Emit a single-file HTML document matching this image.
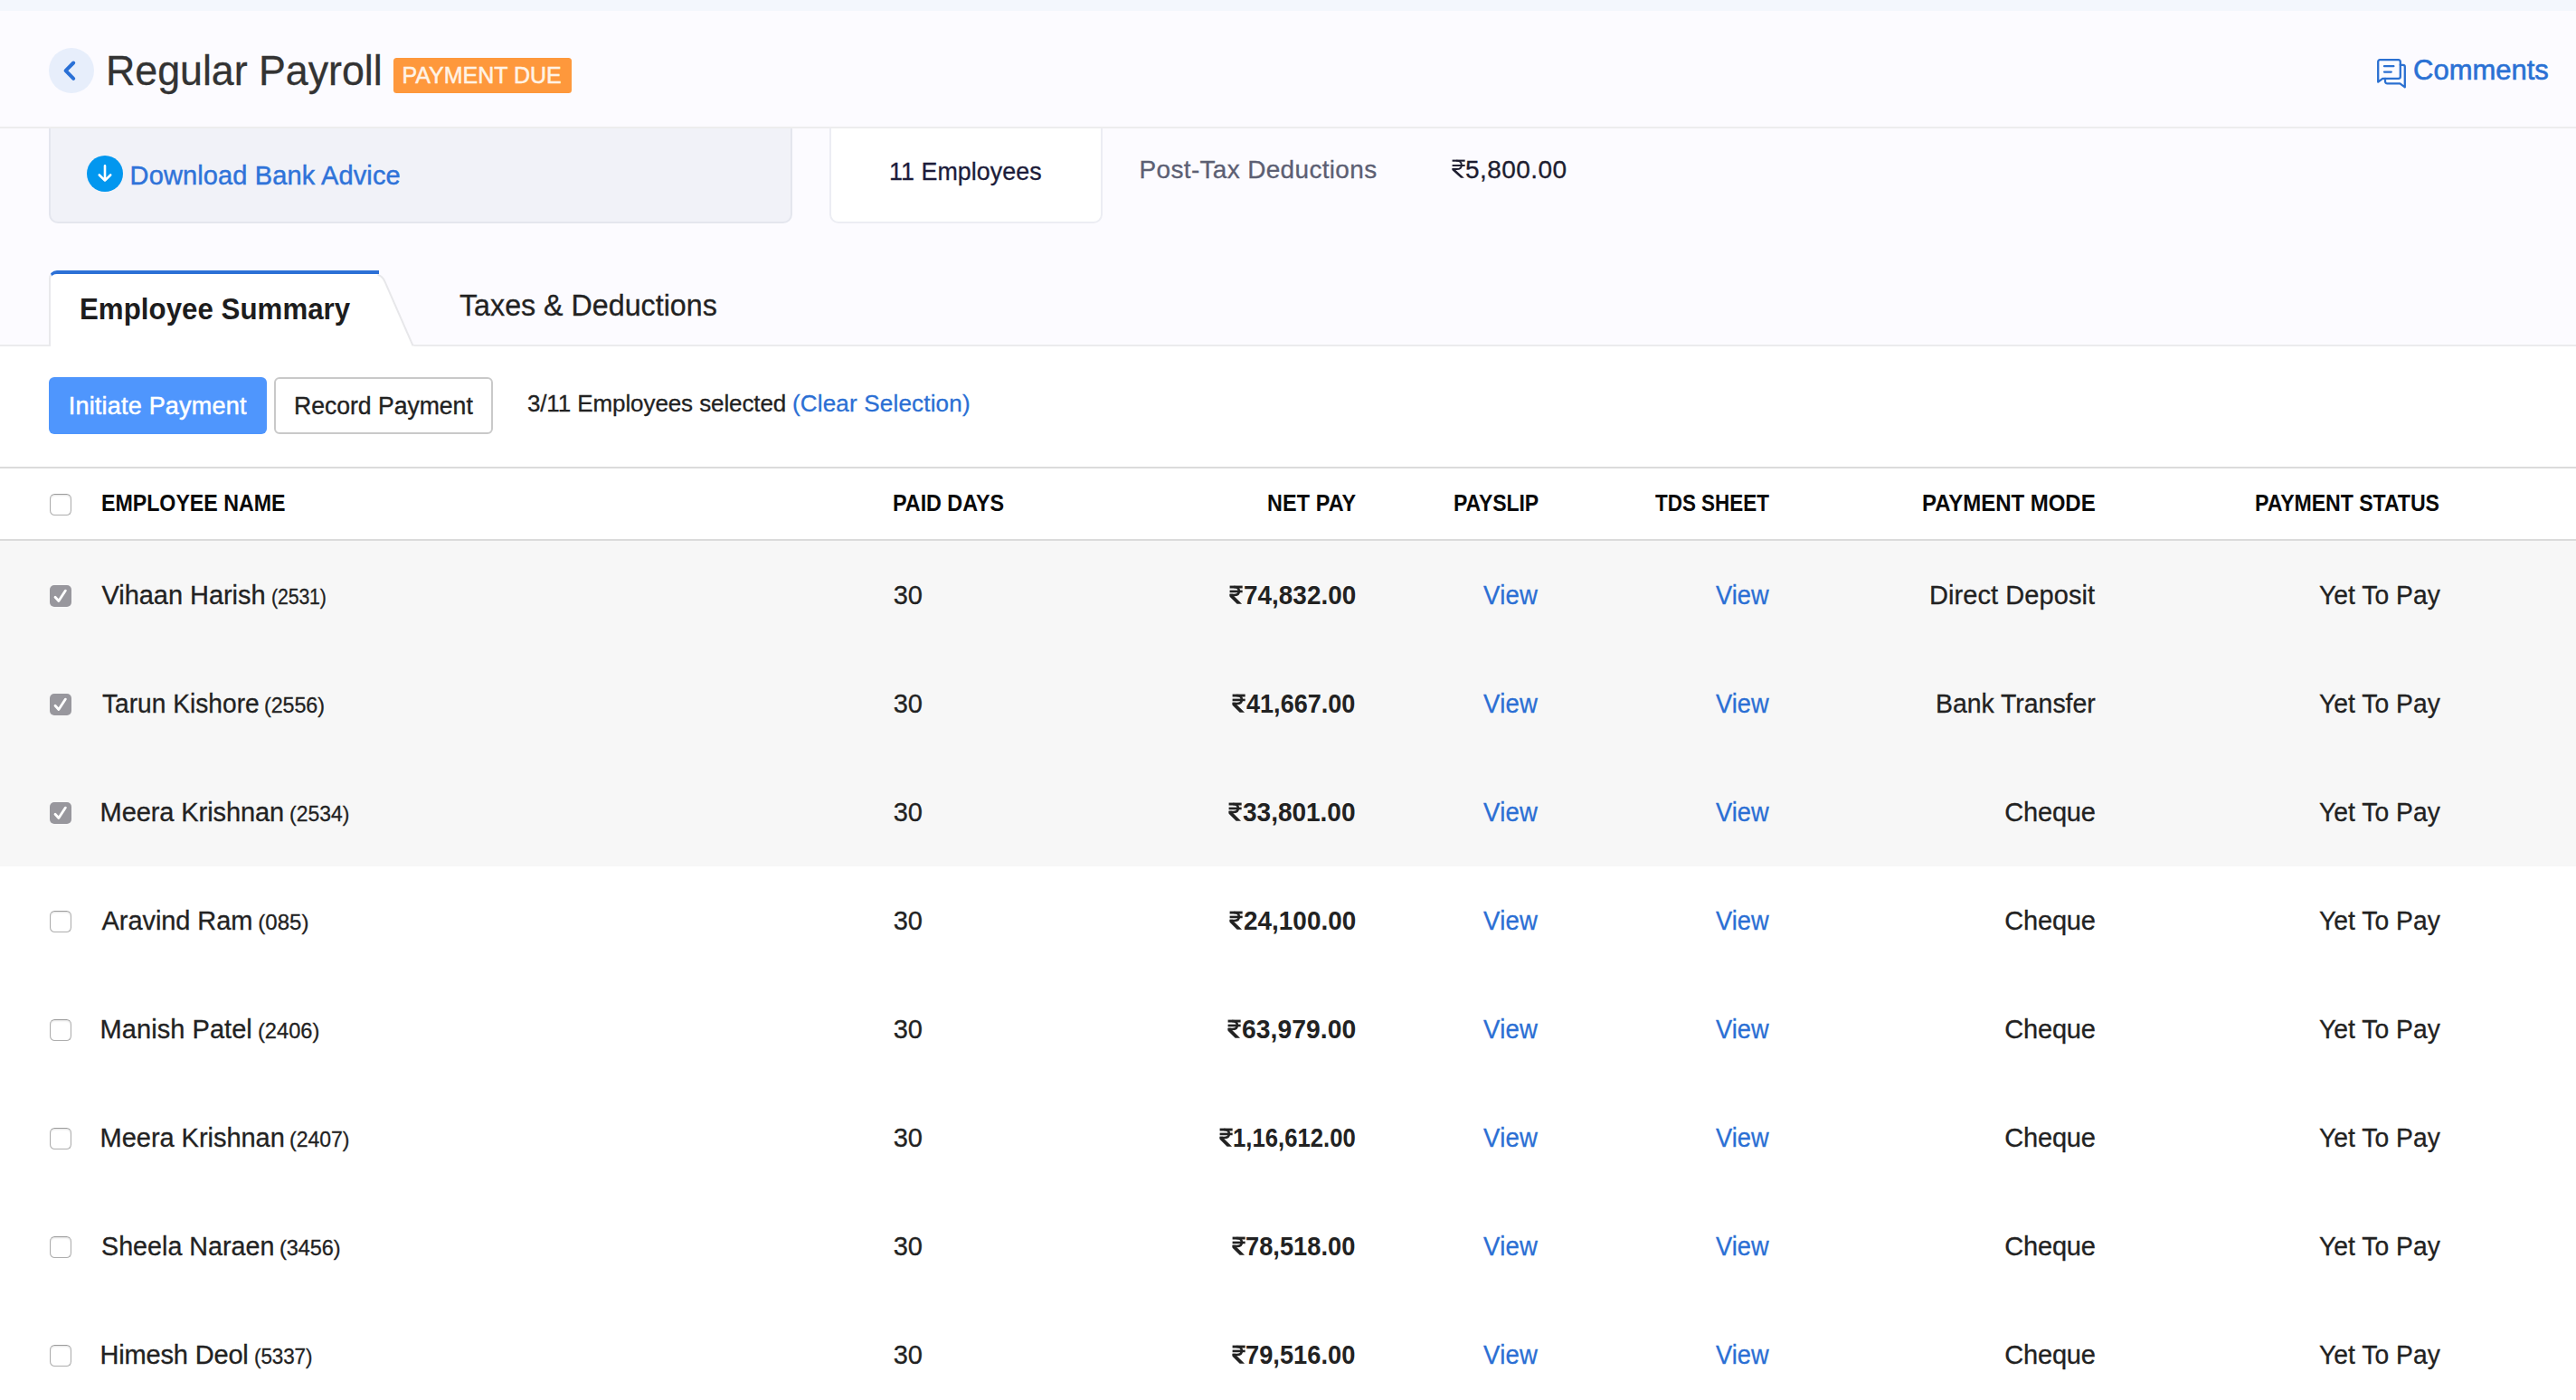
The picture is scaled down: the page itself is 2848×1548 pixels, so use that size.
<!DOCTYPE html><html><head><meta charset="utf-8"><title>Regular Payroll</title><style>
*{box-sizing:border-box;margin:0;padding:0}
html,body{width:2848px;height:1548px;overflow:hidden}
body{background:#fcfbff;font-family:"Liberation Sans",sans-serif;position:relative;color:#222}
.a{position:absolute}
.t{position:absolute;white-space:pre;line-height:normal;transform-origin:0 0}
.cb{position:absolute;left:55px;width:24px;height:24px;border-radius:5.5px}
.cb.off{background:#fff;border:1.5px solid #aeaeae;border-top-color:#9c9c9c;box-shadow:inset 0 1px 2px rgba(0,0,0,.12)}
.cb.on{background:#98979d;border-radius:5px}
</style></head><body>
<div class="a" style="left:54px;top:120px;width:822px;height:127px;border:2px solid #e4e6ee;border-radius:10px;background:#f1f2f8"></div>
<div class="a" style="left:917px;top:120px;width:302px;height:127px;border:2px solid #ecedf3;border-radius:10px;background:#fff"></div>
<div class="a" style="left:0;top:12px;width:2848px;height:128px;background:#fcfbff"></div>
<div class="a" style="left:0;top:0;width:2848px;height:12px;background:#f3f7fd"></div>
<div class="a" style="left:0;top:140px;width:2848px;height:2px;background:#ededee"></div>
<div class="a" style="left:54px;top:53px;width:50px;height:50px;border-radius:50%;background:#e7eefb"></div>
<svg class="a" style="left:54px;top:53px" width="50" height="50" viewBox="0 0 50 50"><path d="M27.2 16.5 L18.6 25.2 L27.2 33.8" fill="none" stroke="#2a70d6" stroke-width="4" stroke-linecap="round" stroke-linejoin="round"/></svg>
<div class="a" style="left:435px;top:64px;width:197px;height:39px;border-radius:3.5px;background:#fe983c"></div>
<svg class="a" style="left:2626px;top:63px" width="36" height="36" viewBox="0 0 36 36" fill="none" stroke="#2b70d1" stroke-width="2.3" stroke-linejoin="round" stroke-linecap="round"><path d="M5.2 3.2 H25.8 A2 2 0 0 1 27.8 5.2 V21.8 A2 2 0 0 1 25.8 23.8 H8.2 L3.2 27.6 V5.2 A2 2 0 0 1 5.2 3.2 Z"/><path d="M27.8 8.8 H30.8 A2 2 0 0 1 32.8 10.8 V33.4 L27.4 29.4 H13.4 A2.4 2.4 0 0 1 11 27 V24"/><path d="M10 10.2 H20.4 M10 16.6 H17.8"/></svg>
<div class="a" style="left:0;top:140px;width:2848px;height:2px;background:#ededee"></div>
<svg class="a" style="left:96px;top:172px" width="40" height="40" viewBox="0 0 40 40"><circle cx="20" cy="20" r="20" fill="#0297ef"/><path d="M20 11.3 V27.4 M13.8 21.5 L20 27.7 L26.2 21.5" fill="none" stroke="#fff" stroke-width="2.6" stroke-linecap="round" stroke-linejoin="round"/></svg>
<div class="a" style="left:0;top:383px;width:2848px;height:1165px;background:#fff"></div>
<div class="a" style="left:0;top:381px;width:2848px;height:2px;background:#ebebed"></div>
<div class="a" style="left:54px;top:299px;width:365px;height:84px;background:#fff;border-top:4px solid #2c70d6;border-left:2px solid #e9e9ec;border-top-left-radius:9px"></div>
<svg class="a" style="left:410px;top:299px" width="54" height="84" viewBox="410 299 54 84"><path d="M410 303 H417 Q422.8 303.3 426.2 311 L457.6 383 H410 Z" fill="#fff"/><path d="M417.5 304 Q422.3 304.3 425.6 311.6 L456.6 382.4" fill="none" stroke="#e7e7ea" stroke-width="2"/></svg>
<div class="a" style="left:54px;top:417px;width:241px;height:63px;border-radius:6px;background:#4f96fd"></div>
<div class="a" style="left:303px;top:417px;width:242px;height:63px;border-radius:6px;background:#fff;border:2px solid #c9c9c9"></div>
<div class="a" style="left:0;top:516px;width:2848px;height:2px;background:#dbdbdb"></div>
<div class="a" style="left:0;top:596px;width:2848px;height:2px;background:#dbdbdb"></div>
<div class="a" style="left:0;top:598px;width:2848px;height:360px;background:#f7f7f7"></div>
<div class="cb off" style="top:546px"></div>
<div class="cb on" style="top:647px"><svg width="24" height="24" viewBox="0 0 24 24"><path d="M6 13.2 L9.9 17.5 L17.4 6.1" fill="none" stroke="#fff" stroke-width="2.8" stroke-linecap="round" stroke-linejoin="round"/></svg></div>
<div class="cb on" style="top:767px"><svg width="24" height="24" viewBox="0 0 24 24"><path d="M6 13.2 L9.9 17.5 L17.4 6.1" fill="none" stroke="#fff" stroke-width="2.8" stroke-linecap="round" stroke-linejoin="round"/></svg></div>
<div class="cb on" style="top:887px"><svg width="24" height="24" viewBox="0 0 24 24"><path d="M6 13.2 L9.9 17.5 L17.4 6.1" fill="none" stroke="#fff" stroke-width="2.8" stroke-linecap="round" stroke-linejoin="round"/></svg></div>
<div class="cb off" style="top:1007px"></div>
<div class="cb off" style="top:1127px"></div>
<div class="cb off" style="top:1247px"></div>
<div class="cb off" style="top:1367px"></div>
<div class="cb off" style="top:1487px"></div>
<svg class="a" style="left:1604.60px;top:175.90px" width="15.28" height="21.31" viewBox="-3 -3 76 106"><g fill="#1d1d30"><rect x="0" y="0" width="70" height="10.5"/><rect x="0" y="27" width="70" height="9.5"/><path d="M0 46.7 L0 58 L47 100 L66 100 L13 52 L13 46.7 Z"/></g><path d="M22 5.25 C44 5.25 51 18 51 30 C51 43 42 51.5 24 51.5 H0" fill="none" stroke="#1d1d30" stroke-width="9.5"/></svg>
<svg class="a" style="left:1359.00px;top:647.20px" width="15.28" height="21.31" viewBox="-3 -3 76 106"><g fill="#222222"><rect x="0" y="0" width="70" height="14.4"/><rect x="0" y="25" width="70" height="13"/><path d="M0 45 L0 60.5 L40 100 L67 100 L17.7 52 L17.7 45 Z"/></g><path d="M22 7.2 C44 7.2 51 18 51 30 C51 43 42 51.5 24 51.5 H0" fill="none" stroke="#222222" stroke-width="13"/></svg>
<svg class="a" style="left:1361.70px;top:767.20px" width="15.28" height="21.31" viewBox="-3 -3 76 106"><g fill="#222222"><rect x="0" y="0" width="70" height="14.4"/><rect x="0" y="25" width="70" height="13"/><path d="M0 45 L0 60.5 L40 100 L67 100 L17.7 52 L17.7 45 Z"/></g><path d="M22 7.2 C44 7.2 51 18 51 30 C51 43 42 51.5 24 51.5 H0" fill="none" stroke="#222222" stroke-width="13"/></svg>
<svg class="a" style="left:1358.10px;top:887.20px" width="15.28" height="21.31" viewBox="-3 -3 76 106"><g fill="#222222"><rect x="0" y="0" width="70" height="14.4"/><rect x="0" y="25" width="70" height="13"/><path d="M0 45 L0 60.5 L40 100 L67 100 L17.7 52 L17.7 45 Z"/></g><path d="M22 7.2 C44 7.2 51 18 51 30 C51 43 42 51.5 24 51.5 H0" fill="none" stroke="#222222" stroke-width="13"/></svg>
<svg class="a" style="left:1359.00px;top:1007.20px" width="15.28" height="21.31" viewBox="-3 -3 76 106"><g fill="#222222"><rect x="0" y="0" width="70" height="14.4"/><rect x="0" y="25" width="70" height="13"/><path d="M0 45 L0 60.5 L40 100 L67 100 L17.7 52 L17.7 45 Z"/></g><path d="M22 7.2 C44 7.2 51 18 51 30 C51 43 42 51.5 24 51.5 H0" fill="none" stroke="#222222" stroke-width="13"/></svg>
<svg class="a" style="left:1357.00px;top:1127.20px" width="15.28" height="21.31" viewBox="-3 -3 76 106"><g fill="#222222"><rect x="0" y="0" width="70" height="14.4"/><rect x="0" y="25" width="70" height="13"/><path d="M0 45 L0 60.5 L40 100 L67 100 L17.7 52 L17.7 45 Z"/></g><path d="M22 7.2 C44 7.2 51 18 51 30 C51 43 42 51.5 24 51.5 H0" fill="none" stroke="#222222" stroke-width="13"/></svg>
<svg class="a" style="left:1348.20px;top:1247.20px" width="15.28" height="21.31" viewBox="-3 -3 76 106"><g fill="#222222"><rect x="0" y="0" width="70" height="14.4"/><rect x="0" y="25" width="70" height="13"/><path d="M0 45 L0 60.5 L40 100 L67 100 L17.7 52 L17.7 45 Z"/></g><path d="M22 7.2 C44 7.2 51 18 51 30 C51 43 42 51.5 24 51.5 H0" fill="none" stroke="#222222" stroke-width="13"/></svg>
<svg class="a" style="left:1361.70px;top:1367.20px" width="15.28" height="21.31" viewBox="-3 -3 76 106"><g fill="#222222"><rect x="0" y="0" width="70" height="14.4"/><rect x="0" y="25" width="70" height="13"/><path d="M0 45 L0 60.5 L40 100 L67 100 L17.7 52 L17.7 45 Z"/></g><path d="M22 7.2 C44 7.2 51 18 51 30 C51 43 42 51.5 24 51.5 H0" fill="none" stroke="#222222" stroke-width="13"/></svg>
<svg class="a" style="left:1361.70px;top:1487.20px" width="15.28" height="21.31" viewBox="-3 -3 76 106"><g fill="#222222"><rect x="0" y="0" width="70" height="14.4"/><rect x="0" y="25" width="70" height="13"/><path d="M0 45 L0 60.5 L40 100 L67 100 L17.7 52 L17.7 45 Z"/></g><path d="M22 7.2 C44 7.2 51 18 51 30 C51 43 42 51.5 24 51.5 H0" fill="none" stroke="#222222" stroke-width="13"/></svg>
<span class="t" style="left:116.50px;top:50.90px;font-size:46px;letter-spacing:-0.04px;color:#333333;-webkit-text-stroke:0.3px;transform:scaleX(0.9737)">Regular Payroll</span>
<span class="t" style="left:444.40px;top:69.10px;font-size:25px;letter-spacing:-0.01px;color:#fff3e6;-webkit-text-stroke:0.5px">PAYMENT DUE</span>
<span class="t" style="left:2668.00px;top:59.70px;font-size:31px;letter-spacing:0.00px;color:#2a71d4;-webkit-text-stroke:0.6px">Comments</span>
<span class="t" style="left:143.60px;top:177.80px;font-size:29px;letter-spacing:0.13px;color:#2f73d9;-webkit-text-stroke:0.45px">Download Bank Advice</span>
<span class="t" style="left:983.00px;top:173.70px;font-size:28px;letter-spacing:0.04px;color:#1c1c3a;-webkit-text-stroke:0.3px;transform:scaleX(0.9590)">11 Employees</span>
<span class="t" style="left:1259.60px;top:171.60px;font-size:28px;letter-spacing:0.32px;color:#5c5f73;-webkit-text-stroke:0.3px">Post-Tax Deductions</span>
<span class="t" style="left:1620.10px;top:171.60px;font-size:28px;letter-spacing:0.44px;color:#1d1d30;-webkit-text-stroke:0.3px">5,800.00</span>
<span class="t" style="left:88.40px;top:322.90px;font-size:33px;letter-spacing:0.03px;color:#1d1d1d;font-weight:700;transform:scaleX(0.9470)">Employee Summary</span>
<span class="t" style="left:507.70px;top:319.40px;font-size:33px;letter-spacing:-0.01px;color:#222222;-webkit-text-stroke:0.3px;transform:scaleX(0.9770)">Taxes &amp; Deductions</span>
<span class="t" style="left:75.70px;top:434.10px;font-size:27px;letter-spacing:0.21px;color:#ffffff;-webkit-text-stroke:0.5px">Initiate Payment</span>
<span class="t" style="left:324.90px;top:434.00px;font-size:27px;letter-spacing:-0.03px;color:#222222;-webkit-text-stroke:0.35px;transform:scaleX(0.9854)">Record Payment</span>
<span class="t" style="left:582.90px;top:431.40px;font-size:26px;letter-spacing:-0.10px;color:#222222;-webkit-text-stroke:0.3px">3/11 Employees selected</span>
<span class="t" style="left:875.90px;top:431.40px;font-size:26px;letter-spacing:0.19px;color:#2b6fd4;-webkit-text-stroke:0.3px">(Clear Selection)</span>
<span class="t" style="left:112.40px;top:541.80px;font-size:25px;letter-spacing:-0.04px;color:#0a0a0a;font-weight:700;transform:scaleX(0.9290)">EMPLOYEE NAME</span>
<span class="t" style="left:986.70px;top:541.80px;font-size:25px;letter-spacing:-0.05px;color:#0a0a0a;font-weight:700;transform:scaleX(0.9349)">PAID DAYS</span>
<span class="t" style="left:1400.50px;top:541.80px;font-size:25px;letter-spacing:0.14px;color:#0a0a0a;font-weight:700;transform:scaleX(0.9343)">NET PAY</span>
<span class="t" style="left:1606.50px;top:541.80px;font-size:25px;letter-spacing:-0.14px;color:#0a0a0a;font-weight:700;transform:scaleX(0.9220)">PAYSLIP</span>
<span class="t" style="left:1830.40px;top:541.80px;font-size:25px;letter-spacing:-0.03px;color:#0a0a0a;font-weight:700;transform:scaleX(0.8986)">TDS SHEET</span>
<span class="t" style="left:2124.60px;top:541.80px;font-size:25px;letter-spacing:-0.06px;color:#0a0a0a;font-weight:700;transform:scaleX(0.9614)">PAYMENT MODE</span>
<span class="t" style="left:2493.30px;top:541.80px;font-size:25px;letter-spacing:-0.07px;color:#0a0a0a;font-weight:700;transform:scaleX(0.9256)">PAYMENT STATUS</span>
<span class="t" style="left:112.60px;top:641.90px;font-size:29px;letter-spacing:-0.06px;color:#222222;-webkit-text-stroke:0.3px">Vihaan Harish</span>
<span class="t" style="left:299.60px;top:645.90px;font-size:24px;letter-spacing:-0.14px;color:#222222;-webkit-text-stroke:0.3px;transform:scaleX(0.8866)">(2531)</span>
<span class="t" style="left:987.70px;top:641.90px;font-size:29px;letter-spacing:-0.10px;color:#222222;-webkit-text-stroke:0.3px">30</span>
<span class="t" style="left:1374.70px;top:641.90px;font-size:29px;letter-spacing:0.05px;color:#222222;font-weight:700;transform:scaleX(0.9598)">74,832.00</span>
<span class="t" style="left:1640.00px;top:641.90px;font-size:29px;letter-spacing:0.28px;color:#2b6fd4;-webkit-text-stroke:0.3px;transform:scaleX(0.9492)">View</span>
<span class="t" style="left:1897.00px;top:641.90px;font-size:29px;letter-spacing:0.07px;color:#2b6fd4;-webkit-text-stroke:0.3px;transform:scaleX(0.9397)">View</span>
<span class="t" style="left:2133.00px;top:641.90px;font-size:29px;letter-spacing:0.08px;color:#222222;-webkit-text-stroke:0.3px">Direct Deposit</span>
<span class="t" style="left:2563.60px;top:641.90px;font-size:29px;letter-spacing:0.05px;color:#222222;-webkit-text-stroke:0.3px;transform:scaleX(0.9735)">Yet To Pay</span>
<span class="t" style="left:112.60px;top:761.90px;font-size:29px;letter-spacing:0.03px;color:#222222;-webkit-text-stroke:0.3px;transform:scaleX(0.9685)">Tarun Kishore</span>
<span class="t" style="left:292.40px;top:765.90px;font-size:24px;letter-spacing:-0.08px;color:#222222;-webkit-text-stroke:0.3px;transform:scaleX(0.9716)">(2556)</span>
<span class="t" style="left:987.70px;top:761.90px;font-size:29px;letter-spacing:-0.10px;color:#222222;-webkit-text-stroke:0.3px">30</span>
<span class="t" style="left:1378.40px;top:761.90px;font-size:29px;letter-spacing:0.03px;color:#222222;font-weight:700;transform:scaleX(0.9313)">41,667.00</span>
<span class="t" style="left:1640.00px;top:761.90px;font-size:29px;letter-spacing:0.28px;color:#2b6fd4;-webkit-text-stroke:0.3px;transform:scaleX(0.9492)">View</span>
<span class="t" style="left:1897.00px;top:761.90px;font-size:29px;letter-spacing:0.07px;color:#2b6fd4;-webkit-text-stroke:0.3px;transform:scaleX(0.9397)">View</span>
<span class="t" style="left:2139.70px;top:761.90px;font-size:29px;letter-spacing:-0.03px;color:#222222;-webkit-text-stroke:0.3px;transform:scaleX(0.9809)">Bank Transfer</span>
<span class="t" style="left:2563.60px;top:761.90px;font-size:29px;letter-spacing:0.05px;color:#222222;-webkit-text-stroke:0.3px;transform:scaleX(0.9735)">Yet To Pay</span>
<span class="t" style="left:110.60px;top:881.90px;font-size:29px;letter-spacing:-0.09px;color:#222222;-webkit-text-stroke:0.3px">Meera Krishnan</span>
<span class="t" style="left:320.00px;top:885.90px;font-size:24px;letter-spacing:0.00px;color:#222222;-webkit-text-stroke:0.3px;transform:scaleX(0.9552)">(2534)</span>
<span class="t" style="left:987.70px;top:881.90px;font-size:29px;letter-spacing:-0.10px;color:#222222;-webkit-text-stroke:0.3px">30</span>
<span class="t" style="left:1373.80px;top:881.90px;font-size:29px;letter-spacing:-0.03px;color:#222222;font-weight:700;transform:scaleX(0.9669)">33,801.00</span>
<span class="t" style="left:1640.00px;top:881.90px;font-size:29px;letter-spacing:0.28px;color:#2b6fd4;-webkit-text-stroke:0.3px;transform:scaleX(0.9492)">View</span>
<span class="t" style="left:1897.00px;top:881.90px;font-size:29px;letter-spacing:0.07px;color:#2b6fd4;-webkit-text-stroke:0.3px;transform:scaleX(0.9397)">View</span>
<span class="t" style="left:2216.30px;top:881.90px;font-size:29px;letter-spacing:-0.20px;color:#222222;-webkit-text-stroke:0.3px">Cheque</span>
<span class="t" style="left:2563.60px;top:881.90px;font-size:29px;letter-spacing:0.05px;color:#222222;-webkit-text-stroke:0.3px;transform:scaleX(0.9735)">Yet To Pay</span>
<span class="t" style="left:112.60px;top:1001.90px;font-size:29px;letter-spacing:-0.08px;color:#222222;-webkit-text-stroke:0.3px">Aravind Ram</span>
<span class="t" style="left:285.20px;top:1005.90px;font-size:24px;letter-spacing:0.05px;color:#222222;-webkit-text-stroke:0.3px">(085)</span>
<span class="t" style="left:987.70px;top:1001.90px;font-size:29px;letter-spacing:-0.10px;color:#222222;-webkit-text-stroke:0.3px">30</span>
<span class="t" style="left:1374.70px;top:1001.90px;font-size:29px;letter-spacing:0.05px;color:#222222;font-weight:700;transform:scaleX(0.9598)">24,100.00</span>
<span class="t" style="left:1640.00px;top:1001.90px;font-size:29px;letter-spacing:0.28px;color:#2b6fd4;-webkit-text-stroke:0.3px;transform:scaleX(0.9492)">View</span>
<span class="t" style="left:1897.00px;top:1001.90px;font-size:29px;letter-spacing:0.07px;color:#2b6fd4;-webkit-text-stroke:0.3px;transform:scaleX(0.9397)">View</span>
<span class="t" style="left:2216.30px;top:1001.90px;font-size:29px;letter-spacing:-0.20px;color:#222222;-webkit-text-stroke:0.3px">Cheque</span>
<span class="t" style="left:2563.60px;top:1001.90px;font-size:29px;letter-spacing:0.05px;color:#222222;-webkit-text-stroke:0.3px;transform:scaleX(0.9735)">Yet To Pay</span>
<span class="t" style="left:110.60px;top:1121.90px;font-size:29px;letter-spacing:0.05px;color:#222222;-webkit-text-stroke:0.3px">Manish Patel</span>
<span class="t" style="left:284.80px;top:1125.90px;font-size:24px;letter-spacing:0.00px;color:#222222;-webkit-text-stroke:0.3px;transform:scaleX(0.9851)">(2406)</span>
<span class="t" style="left:987.70px;top:1121.90px;font-size:29px;letter-spacing:-0.10px;color:#222222;-webkit-text-stroke:0.3px">30</span>
<span class="t" style="left:1372.70px;top:1121.90px;font-size:29px;letter-spacing:0.05px;color:#222222;font-weight:700;transform:scaleX(0.9756)">63,979.00</span>
<span class="t" style="left:1640.00px;top:1121.90px;font-size:29px;letter-spacing:0.28px;color:#2b6fd4;-webkit-text-stroke:0.3px;transform:scaleX(0.9492)">View</span>
<span class="t" style="left:1897.00px;top:1121.90px;font-size:29px;letter-spacing:0.07px;color:#2b6fd4;-webkit-text-stroke:0.3px;transform:scaleX(0.9397)">View</span>
<span class="t" style="left:2216.30px;top:1121.90px;font-size:29px;letter-spacing:-0.20px;color:#222222;-webkit-text-stroke:0.3px">Cheque</span>
<span class="t" style="left:2563.60px;top:1121.90px;font-size:29px;letter-spacing:0.05px;color:#222222;-webkit-text-stroke:0.3px;transform:scaleX(0.9735)">Yet To Pay</span>
<span class="t" style="left:110.60px;top:1241.90px;font-size:29px;letter-spacing:-0.04px;color:#222222;-webkit-text-stroke:0.3px">Meera Krishnan</span>
<span class="t" style="left:320.10px;top:1245.90px;font-size:24px;letter-spacing:-0.04px;color:#222222;-webkit-text-stroke:0.3px;transform:scaleX(0.9597)">(2407)</span>
<span class="t" style="left:987.70px;top:1241.90px;font-size:29px;letter-spacing:-0.10px;color:#222222;-webkit-text-stroke:0.3px">30</span>
<span class="t" style="left:1362.90px;top:1241.90px;font-size:29px;letter-spacing:0.02px;color:#222222;font-weight:700;transform:scaleX(0.8847)">1,16,612.00</span>
<span class="t" style="left:1640.00px;top:1241.90px;font-size:29px;letter-spacing:0.28px;color:#2b6fd4;-webkit-text-stroke:0.3px;transform:scaleX(0.9492)">View</span>
<span class="t" style="left:1897.00px;top:1241.90px;font-size:29px;letter-spacing:0.07px;color:#2b6fd4;-webkit-text-stroke:0.3px;transform:scaleX(0.9397)">View</span>
<span class="t" style="left:2216.30px;top:1241.90px;font-size:29px;letter-spacing:-0.20px;color:#222222;-webkit-text-stroke:0.3px">Cheque</span>
<span class="t" style="left:2563.60px;top:1241.90px;font-size:29px;letter-spacing:0.05px;color:#222222;-webkit-text-stroke:0.3px;transform:scaleX(0.9735)">Yet To Pay</span>
<span class="t" style="left:111.60px;top:1361.90px;font-size:29px;letter-spacing:0.02px;color:#222222;-webkit-text-stroke:0.3px;transform:scaleX(0.9880)">Sheela Naraen</span>
<span class="t" style="left:308.70px;top:1365.90px;font-size:24px;letter-spacing:-0.08px;color:#222222;-webkit-text-stroke:0.3px;transform:scaleX(0.9791)">(3456)</span>
<span class="t" style="left:987.70px;top:1361.90px;font-size:29px;letter-spacing:-0.10px;color:#222222;-webkit-text-stroke:0.3px">30</span>
<span class="t" style="left:1377.40px;top:1361.90px;font-size:29px;letter-spacing:0.03px;color:#222222;font-weight:700;transform:scaleX(0.9386)">78,518.00</span>
<span class="t" style="left:1640.00px;top:1361.90px;font-size:29px;letter-spacing:0.28px;color:#2b6fd4;-webkit-text-stroke:0.3px;transform:scaleX(0.9492)">View</span>
<span class="t" style="left:1897.00px;top:1361.90px;font-size:29px;letter-spacing:0.07px;color:#2b6fd4;-webkit-text-stroke:0.3px;transform:scaleX(0.9397)">View</span>
<span class="t" style="left:2216.30px;top:1361.90px;font-size:29px;letter-spacing:-0.20px;color:#222222;-webkit-text-stroke:0.3px">Cheque</span>
<span class="t" style="left:2563.60px;top:1361.90px;font-size:29px;letter-spacing:0.05px;color:#222222;-webkit-text-stroke:0.3px;transform:scaleX(0.9735)">Yet To Pay</span>
<span class="t" style="left:110.60px;top:1481.90px;font-size:29px;letter-spacing:-0.18px;color:#222222;-webkit-text-stroke:0.3px">Himesh Deol</span>
<span class="t" style="left:280.60px;top:1485.90px;font-size:24px;letter-spacing:-0.09px;color:#222222;-webkit-text-stroke:0.3px;transform:scaleX(0.9343)">(5337)</span>
<span class="t" style="left:987.70px;top:1481.90px;font-size:29px;letter-spacing:-0.10px;color:#222222;-webkit-text-stroke:0.3px">30</span>
<span class="t" style="left:1377.40px;top:1481.90px;font-size:29px;letter-spacing:0.03px;color:#222222;font-weight:700;transform:scaleX(0.9386)">79,516.00</span>
<span class="t" style="left:1640.00px;top:1481.90px;font-size:29px;letter-spacing:0.28px;color:#2b6fd4;-webkit-text-stroke:0.3px;transform:scaleX(0.9492)">View</span>
<span class="t" style="left:1897.00px;top:1481.90px;font-size:29px;letter-spacing:0.07px;color:#2b6fd4;-webkit-text-stroke:0.3px;transform:scaleX(0.9397)">View</span>
<span class="t" style="left:2216.30px;top:1481.90px;font-size:29px;letter-spacing:-0.20px;color:#222222;-webkit-text-stroke:0.3px">Cheque</span>
<span class="t" style="left:2563.60px;top:1481.90px;font-size:29px;letter-spacing:0.05px;color:#222222;-webkit-text-stroke:0.3px;transform:scaleX(0.9735)">Yet To Pay</span>
</body></html>
